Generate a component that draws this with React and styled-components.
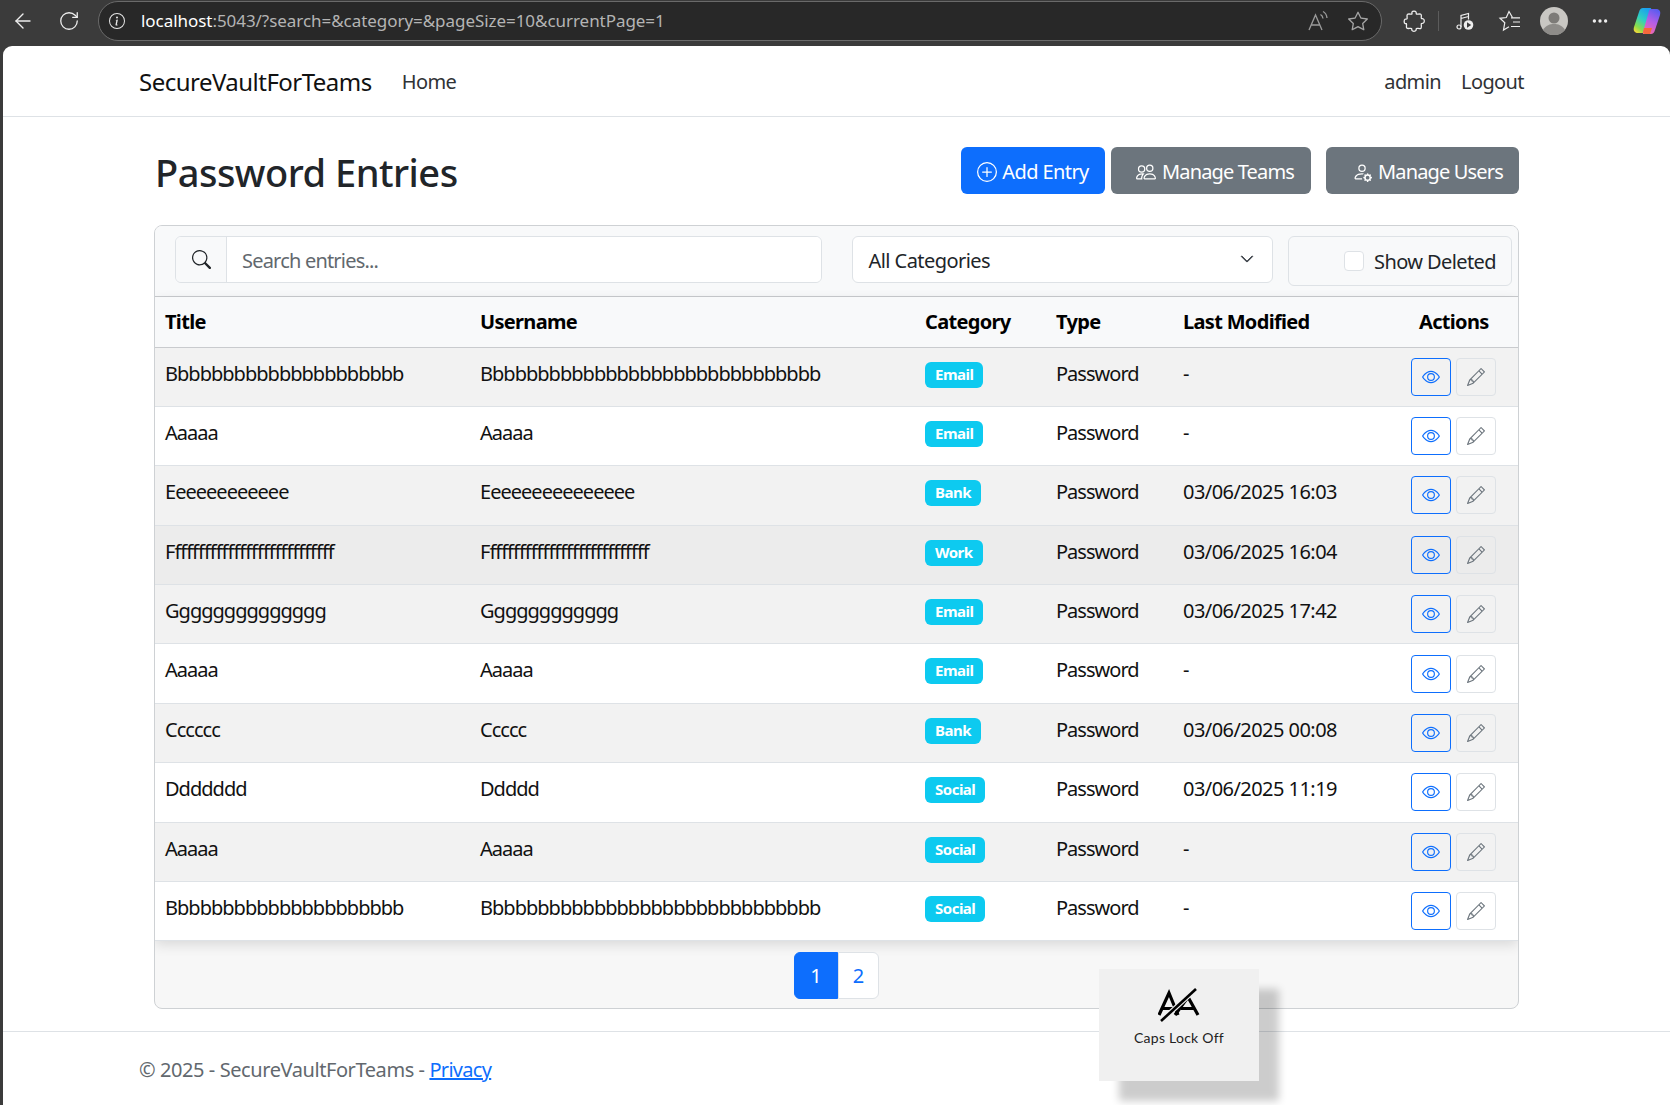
import styled, { createGlobalStyle } from "styled-components";
import {
  BsEye,
  BsInfoCircle,
  BsPencil,
  BsPeople,
  BsPersonGear,
  BsPlusCircle,
  BsSearch,
  BsStar,
  BsThreeDots,
  BsChevronDown,
} from "react-icons/bs";
import { LuArrowLeft, LuRotateCw } from "react-icons/lu";

const FONT = `"Noto Sans", "Open Sans", sans-serif`;

const rows = [
  { title: "Bbbbbbbbbbbbbbbbbbbbb", user: "Bbbbbbbbbbbbbbbbbbbbbbbbbbbbbb", cat: "Email", mod: "-" },
  { title: "Aaaaa", user: "Aaaaa", cat: "Email", mod: "-" },
  { title: "Eeeeeeeeeeee", user: "Eeeeeeeeeeeeeee", cat: "Bank", mod: "03/06/2025 16:03" },
  { title: "Ffffffffffffffffffffffffffff", user: "Ffffffffffffffffffffffffffff", cat: "Work", mod: "03/06/2025 16:04", hover: true },
  { title: "Gggggggggggggg", user: "Gggggggggggg", cat: "Email", mod: "03/06/2025 17:42" },
  { title: "Aaaaa", user: "Aaaaa", cat: "Email", mod: "-" },
  { title: "Cccccc", user: "Ccccc", cat: "Bank", mod: "03/06/2025 00:08" },
  { title: "Ddddddd", user: "Ddddd", cat: "Social", mod: "03/06/2025 11:19" },
  { title: "Aaaaa", user: "Aaaaa", cat: "Social", mod: "-" },
  { title: "Bbbbbbbbbbbbbbbbbbbbb", user: "Bbbbbbbbbbbbbbbbbbbbbbbbbbbbbb", cat: "Social", mod: "-" },
];

const App = () => {
  return (
    <>
      <GlobalStyle />
      <BrowserBar>
        <ChromeIcon><LuArrowLeft size={24} strokeWidth={1.4} /></ChromeIcon>
        <ChromeIcon><LuRotateCw size={22} strokeWidth={1.4} /></ChromeIcon>
        <AddressBar>
          <BsInfoCircle size={16} color="#e6e6e6" />
          <Url>
            <strong>localhost</strong>:5043/?search=&amp;category=&amp;pageSize=10&amp;currentPage=1
          </Url>
          <AddressRight>
            <svg width="22" height="22" viewBox="0 0 22 22" fill="none" stroke="#9a9a9a" strokeWidth="1.3">
              <path d="M1 20 7.500 5 14 20M3.500 15h8" />
              <path d="M12.500 4.500c1.500.8 2.300 2.200 2.500 4M15 1.500c2.300 1.200 3.700 3.500 4 6.500" />
            </svg>
            <BsStar size={20} color="#a5a5a5" />
          </AddressRight>
        </AddressBar>
        <ToolIcons>
          <svg width="24" height="24" viewBox="0 0 24 24" fill="none" stroke="#eee" strokeWidth="1.3">
            <path d="M10 3c.6-1.200 3.400-1.200 4 0 .4.800 0 1.500.4 2 .5.600 3.600-.6 4.600.4s-.2 3.500.4 4c.5.400 1.200.2 2 .6 1.200.6 1.200 3.400 0 4-.8.400-1.500.2-2 .6-.6.500.6 3.600-.4 4.600s-3.800-.3-4.500.3c-.5.500-.2 1.300-.6 2-.6 1.100-3.300 1.100-3.900 0-.4-.7 0-1.500-.5-2-.6-.6-3.700.6-4.700-.4s.2-3.600-.4-4.200C4.500 14.500 3.600 15 3 14.500 1.900 13.800 1.900 11 3 10.300c.6-.4 1.500.1 2-.4.600-.6-.6-3.500.4-4.500s4 .1 4.500-.4c.4-.5-.3-1.200.1-2z" />
          </svg>
          <Divider />
          <svg width="20" height="20" viewBox="0 0 20 20" fill="none" stroke="#eee" strokeWidth="1.2">
            <circle cx="4" cy="16" r="2" />
            <path d="M6 16V4.500l7.500-2v6M6 7.500l7.500-2" />
            <circle cx="13.500" cy="14" r="4.800" fill="#eee" stroke="none" />
            <path d="M12 11.300v5.400l4.200-2.700z" fill="#3b3b3b" stroke="none" />
          </svg>
          <svg width="24" height="22" viewBox="0 0 24 22" fill="none" stroke="#eee" strokeWidth="1.2">
            <path d="M14.500 7.500 11 1.500 8.300 7.500 2 8.300l4.800 4.400L5.500 20l5.500-3.200" />
            <path d="M13 7.800h9M15 12h7M13 16.500h9" />
          </svg>
          <Avatar>
            <svg width="28" height="28" viewBox="0 0 28 28">
              <circle cx="14" cy="14" r="14" fill="#c9c7c3" />
              <circle cx="14" cy="11" r="5.500" fill="#7d7b78" />
              <path d="M3 23c3-5 7-6 11-6s8 1 11 6a14 14 0 0 1-22 0z" fill="#8e8c89" />
            </svg>
          </Avatar>
          <BsThreeDots size={18} color="#eee" />
          <svg width="30" height="30" viewBox="0 0 30 30">
            <defs>
              <linearGradient id="copA" x1="0.7" y1="0" x2="0.2" y2="1">
                <stop offset="0" stopColor="#1a9ff0" />
                <stop offset="0.45" stopColor="#2fd0c0" />
                <stop offset="0.8" stopColor="#8bdc4a" />
                <stop offset="1" stopColor="#f0d83a" />
              </linearGradient>
              <linearGradient id="copB" x1="0.7" y1="0" x2="0.3" y2="1">
                <stop offset="0" stopColor="#5a5cf0" />
                <stop offset="0.5" stopColor="#b45ee6" />
                <stop offset="1" stopColor="#f56aa8" />
              </linearGradient>
            </defs>
            <path d="M11 2h7c1 0 1.500.5 1 2L13 25c-.4 1.300-1 2-2.500 2H6C2.500 27 1 24.500 2 21L7 6c.7-2.500 2-4 4-4z" fill="url(#copA)" />
            <path d="M19 28h-7c-1 0-1.500-.5-1-2l6-21c.4-1.300 1-2 2.500-2H24c3.500 0 5 2.500 4 6l-5 15c-.7 2.500-2 4-4 4z" fill="url(#copB)" />
            <path d="M12 22h8l-2 6h-5c-1.500 0-2.200-1-1.800-2.500z" fill="#f5683a" />
          </svg>
        </ToolIcons>
      </BrowserBar>

      <Page>
        <NavBar>
          <Brand>SecureVaultForTeams</Brand>
          <NavLink>Home</NavLink>
          <NavRight>
            <NavLink>admin</NavLink>
            <NavLink>Logout</NavLink>
          </NavRight>
        </NavBar>

        <Main>
          <TitleRow>
            <Heading>Password Entries</Heading>
            <ButtonRow>
              <ActionButton $primary $w={144}><BsPlusCircle size={20} />Add Entry</ActionButton>
              <ManageButton $w={200} $pad={8}><BsPeople size={20} />Manage Teams</ManageButton>
              <ManageButton $w={193} $pad={10}><BsPersonGear size={20} />Manage Users</ManageButton>
            </ButtonRow>
          </TitleRow>

          <Card>
            <Filters>
              <SearchGroup>
                <SearchAddon><BsSearch size={19} color="#212529" /></SearchAddon>
                <SearchText>Search entries...</SearchText>
              </SearchGroup>
              <SelectBox>
                All Categories
                <Chevron size={14} color="#343a40" strokeWidth={0.8} />
              </SelectBox>
              <CheckWrap>
                <CheckBox />
                Show Deleted
              </CheckWrap>
            </Filters>

            <Table>
              <colgroup>
                <col width="315" />
                <col width="445" />
                <col width="131" />
                <col width="127" />
                <col width="234" />
                <col width="111" />
              </colgroup>
              <thead>
                <tr>
                  <Th>Title</Th>
                  <Th>Username</Th>
                  <Th>Category</Th>
                  <Th>Type</Th>
                  <Th>Last Modified</Th>
                  <ActionsTh>Actions</ActionsTh>
                </tr>
              </thead>
              <tbody>
                {rows.map((r, i) => (
                  <Row key={i} $odd={i % 2 === 0} $hover={r.hover}>
                    <Td>{r.title}</Td>
                    <Td>{r.user}</Td>
                    <Td><Badge>{r.cat}</Badge></Td>
                    <Td>Password</Td>
                    <DateTd>{r.mod}</DateTd>
                    <ActionCell>
                      <IconButtons>
                        <ViewButton><BsEye size={18} /></ViewButton>
                        <EditButton><BsPencil size={18} /></EditButton>
                      </IconButtons>
                    </ActionCell>
                  </Row>
                ))}
              </tbody>
            </Table>

            <CardFooter>
              <PageLink $active>1</PageLink>
              <PageLink>2</PageLink>
            </CardFooter>
          </Card>
        </Main>

        <Footer>
          © 2025 - SecureVaultForTeams - <FooterLink>Privacy</FooterLink>
        </Footer>

        <CapsToast>
          <svg width="42" height="36" viewBox="0 0 42 36" fill="none" stroke="#000" strokeWidth="3.200">
            <path d="M1 27 11 5l9 22M5 20.500h12" />
            <path d="M17 27 30 9l10 18M23 20.500h14" />
            <path d="M3 33 38 1" stroke="#f0f0f0" strokeWidth="5" />
            <path d="M3 33 38 1" strokeWidth="2.600" />
          </svg>
          <CapsLabel>Caps Lock Off</CapsLabel>
        </CapsToast>
      </Page>
    </>
  );
};

export default App;

const GlobalStyle = createGlobalStyle`
  html, body {
    margin: 0;
    padding: 0;
    background: #3b3b3b;
  }
  body {
    font-family: ${FONT};
    color: #212529;
    height: 1105px;
    overflow: hidden;
  }
  * {
    box-sizing: border-box;
  }
`;

const BrowserBar = styled.div`
  height: 46px;
  display: flex;
  align-items: center;
  padding: 0 0 5px 5px;
  color: #eee;
`;

const ChromeIcon = styled.div`
  width: 36px;
  height: 36px;
  margin-right: 10px;
  display: flex;
  align-items: center;
  justify-content: center;
  color: #eee;

  &:nth-child(2) {
    margin-right: 0;
  }
`;

const AddressBar = styled.div`
  margin-left: 11px;
  width: 1284px;
  height: 40px;
  flex-shrink: 0;
  border: 1px solid #6a6a6a;
  border-radius: 20px;
  background: #282828;
  display: flex;
  align-items: center;
  padding: 0 13px 0 10px;
`;

const Url = styled.div`
  margin-left: 16px;
  font-size: 17px;
  letter-spacing: -0.05px;
  color: #b4b4b4;
  white-space: nowrap;

  strong {
    font-weight: 400;
    color: #fff;
  }
`;

const AddressRight = styled.div`
  margin-left: auto;
  display: flex;
  align-items: center;
  gap: 18px;
`;

const ToolIcons = styled.div`
  margin-left: 20px;
  display: grid;
  grid-template-columns: 24px 24px 30px 60px 28px 64px 30px;
  align-items: center;
  justify-items: center;
`;

const Divider = styled.div`
  width: 1px;
  height: 20px;
  background: #5c5c5c;
`;

const Avatar = styled.div`
  width: 28px;
  height: 28px;
`;

const Page = styled.div`
  position: relative;
  margin-left: 3px;
  height: 1059px;
  background: #fff;
  border-radius: 9px 9px 0 0;
  overflow: hidden;
`;

const NavBar = styled.div`
  height: 71px;
  border-bottom: 1px solid #dee2e6;
  display: flex;
  align-items: center;
  padding: 0 146px 0 136px;
`;

const Brand = styled.div`
  font-size: 24px;
  letter-spacing: -0.52px;
  color: #111;
  margin-right: 30px;
`;

const NavLink = styled.div`
  font-size: 20px;
  letter-spacing: -0.6px;
  color: #303336;
`;

const NavRight = styled.div`
  margin-left: auto;
  display: flex;
  gap: 20px;
`;

const Main = styled.div`
  padding: 30px 0 0 151px;
  width: 1516px;
`;

const TitleRow = styled.div`
  display: flex;
  align-items: flex-start;
  justify-content: space-between;
  height: 78px;
`;

const Heading = styled.h1`
  margin: -1px 0 0 1px;
  font-size: 38px;
  font-weight: 500;
  letter-spacing: -0.5px;
  line-height: 52px;
  color: #212529;
`;

const ButtonRow = styled.div`
  display: flex;
  gap: 6px;

  & > :last-child {
    margin-left: 9px;
  }
`;

const ActionButton = styled.div`
  width: ${(p) => p.$w}px;
  height: 47px;
  padding-top: 2px;
  border-radius: 6px;
  background: ${(p) => (p.$primary ? "#0d6efd" : "#6c757d")};
  color: #fff;
  font-size: 20px;
  letter-spacing: -0.6px;
  display: flex;
  align-items: center;
  justify-content: center;
  gap: 5px;
`;

const ManageButton = styled(ActionButton)`
  padding-left: ${(p) => p.$pad}px;
  letter-spacing: -0.85px;
  gap: 6px;
`;

const Card = styled.div`
  width: 1365px;
  height: 784px;
  border: 1px solid #ced1d4;
  border-radius: 8px;
  background: #f7f7f7;
  overflow: hidden;
`;

const Filters = styled.div`
  height: 71px;
  background: #f8f9fa;
  border-bottom: 1px solid #c9cbce;
  padding: 10px 6px 0 20px;
  display: flex;
  align-items: flex-start;
`;

const SearchGroup = styled.div`
  width: 649px;
  height: 47px;
  display: flex;
  border: 1px solid #dee2e6;
  border-radius: 6px;
  overflow: hidden;
`;

const SearchAddon = styled.div`
  width: 51px;
  background: #f8f9fa;
  border-right: 1px solid #dee2e6;
  display: flex;
  align-items: center;
  justify-content: center;
`;

const SearchText = styled.div`
  flex: 1;
  background: #fff;
  padding: 2px 0 0 15px;
  display: flex;
  align-items: center;
  color: #62686e;
  font-size: 20px;
  letter-spacing: -0.8px;
`;

const SelectBox = styled.div`
  width: 421px;
  height: 47px;
  margin-left: 30px;
  background: #fff;
  border: 1px solid #dee2e6;
  border-radius: 6px;
  padding: 2px 18px 0 15px;
  display: flex;
  align-items: center;
  justify-content: space-between;
  font-size: 20px;
  letter-spacing: -0.55px;
  color: #212529;
`;

const Chevron = styled(BsChevronDown)`
  margin-bottom: 4px;
`;

const CheckWrap = styled.div`
  width: 225px;
  height: 50px;
  margin-left: 15px;
  border: 1px solid #dee2e6;
  border-radius: 6px;
  padding-right: 15px;
  display: flex;
  align-items: center;
  justify-content: flex-end;
  gap: 10px;
  font-size: 20px;
  letter-spacing: -0.6px;
  color: #212529;
`;

const CheckBox = styled.div`
  width: 20px;
  height: 20px;
  background: #fff;
  border: 1px solid #dee2e6;
  border-radius: 4px;
`;

const Table = styled.table`
  width: 1363px;
  table-layout: fixed;
  border-collapse: collapse;
  background: #fff;
  box-shadow: 0 4px 12px rgba(0, 0, 0, 0.12);
`;

const Th = styled.th`
  height: 50px;
  padding: 0 10px;
  text-align: left;
  font-size: 20px;
  font-weight: 700;
  letter-spacing: -0.68px;
  color: #000;
  background: #f8f9fa;
  border-bottom: 1px solid #c9cbce;
  white-space: nowrap;
`;

const ActionsTh = styled(Th)`
  padding-left: 12px;
`;

const Row = styled.tr`
  height: 59.4px;
  background: ${(p) => (p.$hover ? "#ececec" : p.$odd ? "#f2f2f2" : "#fff")};
`;

const Td = styled.td`
  padding: 11px 10px 0;
  vertical-align: top;
  font-size: 20px;
  line-height: 30px;
  letter-spacing: -0.98px;
  color: #111;
  border-bottom: 1px solid #dee2e6;
  white-space: nowrap;
`;

const DateTd = styled(Td)`
  letter-spacing: -0.55px;
`;

const ActionCell = styled(Td)`
  padding: 0 0 0 4px;
  vertical-align: middle;
`;

const IconButtons = styled.div`
  display: flex;
  gap: 5px;
`;

const ViewButton = styled.div`
  width: 40px;
  height: 38px;
  border: 1px solid #0d6efd;
  border-radius: 4px;
  color: #0d6efd;
  display: flex;
  align-items: center;
  justify-content: center;
`;

const EditButton = styled(ViewButton)`
  border-color: #dee2e6;
  color: #6c757d;
`;

const Badge = styled.span`
  display: inline-block;
  margin-top: 3px;
  padding: 0 10px;
  height: 26px;
  line-height: 25px;
  border-radius: 6px;
  background: #0dcaf0;
  color: #fff;
  font-size: 15px;
  font-weight: 700;
  letter-spacing: -0.5px;
  vertical-align: top;
`;

const CardFooter = styled.div`
  display: flex;
  justify-content: center;
  padding-top: 11px;
`;

const PageLink = styled.div`
  width: ${(p) => (p.$active ? 44 : 41)}px;
  height: 47px;
  display: flex;
  align-items: center;
  justify-content: center;
  font-size: 20px;
  background: ${(p) => (p.$active ? "#0d6efd" : "#fff")};
  color: ${(p) => (p.$active ? "#fff" : "#0d6efd")};
  border: 1px solid ${(p) => (p.$active ? "#0d6efd" : "#dee2e6")};
  border-radius: ${(p) => (p.$active ? "6px 0 0 6px" : "0 6px 6px 0")};
`;

const Footer = styled.div`
  margin-top: 22px;
  border-top: 1px solid #dee2e6;
  padding: 24px 0 0 136px;
  font-size: 20px;
  letter-spacing: -0.42px;
  color: #62686e;
`;

const FooterLink = styled.a`
  color: #0d6efd;
  text-decoration: underline;
  letter-spacing: -0.7px;
`;

const CapsToast = styled.div`
  position: absolute;
  left: 1096px;
  top: 923px;
  width: 160px;
  height: 112px;
  background: #f0f0f0;
  box-shadow: 20px 20px 8px rgba(0, 0, 0, 0.2);
  display: flex;
  flex-direction: column;
  align-items: center;
  padding-top: 19px;
  gap: 5px;
`;

const CapsLabel = styled.div`
  font-family: Lato, sans-serif;
  font-size: 14px;
  letter-spacing: 0.25px;
  color: #222;
`;
